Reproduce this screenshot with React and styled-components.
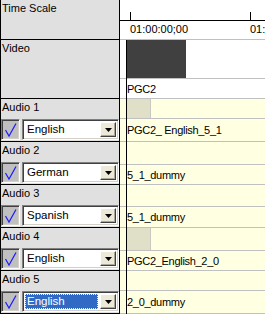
import React from 'react';
import styled, { createGlobalStyle } from 'styled-components';

const GlobalStyle = createGlobalStyle`
  html, body {
    margin: 0;
    padding: 0;
    width: 265px;
    height: 314px;
    overflow: hidden;
    background: #ffffff;
  }
  body {
    font-family: "Liberation Sans", Arial, sans-serif;
    font-size: 11px;
    color: #000000;
  }
  * { box-sizing: border-box; }
`;

// top = height of the upper lane of each audio track on the timeline (block is 43px)
const tracks = [
  { name: 'Audio 1', lang: 'English', clip: 'PGC2_ English_5_1', stub: true, top: 20 },
  { name: 'Audio 2', lang: 'German', clip: '5_1_dummy', top: 23 },
  { name: 'Audio 3', lang: 'Spanish', clip: '5_1_dummy', top: 22 },
  { name: 'Audio 4', lang: 'English', clip: 'PGC2_English_2_0', stub: true, top: 23 },
  { name: 'Audio 5', lang: 'English', clip: '2_0_dummy', focused: true, top: 20 },
];

const Check = function () {
  return (
    <svg width="17" height="19" viewBox="0 0 17 19">
      <path d="M3.5 10 L7 16 L14 3.5" fill="none" stroke="#1a1aff" strokeWidth="1.2" />
    </svg>
  );
};

const Arrow = function () {
  return (
    <svg width="7" height="4" viewBox="0 0 7 4">
      <path d="M0 0 H7 L3.5 4 Z" fill="#000" />
    </svg>
  );
};

const App = function () {
  return (
    <>
      <GlobalStyle />
      <Window>
        <Headers>
          <HeaderCell h={40}>Time Scale</HeaderCell>
          <HeaderCell h={59}>Video</HeaderCell>
          {tracks.map((t) => (
            <AudioHeader key={t.name}>
              <HeaderLabel>{t.name}</HeaderLabel>
              <Controls>
                <CheckBox><Check /></CheckBox>
                <Combo>
                  <ComboText focused={t.focused}>{t.lang}</ComboText>
                  <DropButton><Arrow /></DropButton>
                </Combo>
              </Controls>
            </AudioHeader>
          ))}
        </Headers>
        <Timeline>
          <Ruler>
            <TickRow>
              <Tick />
              <Tick />
            </TickRow>
            <LabelRow>
              <TickLabel>01:00:00;00</TickLabel>
              <TickLabel>01:00:00;00</TickLabel>
            </LabelRow>
          </Ruler>
          <Lane h={39}>
            <VideoClip />
          </Lane>
          <Lane h={20}>PGC2</Lane>
          {tracks.map((t) => (
            <div key={t.name}>
              <Lane h={t.top} audio>{t.stub && <Stub />}</Lane>
              <Lane h={43 - t.top} audio>{t.clip}</Lane>
            </div>
          ))}
          <Cursor />
        </Timeline>
      </Window>
    </>
  );
};

export default App;

const Window = styled.div`
  display: flex;
  width: 265px;
  height: 314px;
  overflow: hidden;
`;

const Headers = styled.div`
  flex: none;
  width: 120px;
  display: flex;
  flex-direction: column;
  background: #e0e0e0;
  border-left: 1px solid #000;
  border-right: 1px solid #000;
`;

const HeaderCell = styled.div`
  height: ${(p) => p.h}px;
  padding: 2px 0 0 1px;
  line-height: 13px;
  border-bottom: 1px solid #000;
`;

const AudioHeader = styled.div`
  height: 43px;
  display: flex;
  flex-direction: column;
  border-bottom: 1px solid #000;
`;

const HeaderLabel = styled.div`
  height: 20px;
  padding: 2px 0 0 1px;
  line-height: 13px;
`;

const Controls = styled.div`
  display: flex;
  gap: 2px;
  height: 21px;
`;

const CheckBox = styled.div`
  width: 19px;
  height: 21px;
  display: flex;
  align-items: center;
  justify-content: center;
  background: #c0c0c0;
  border: 1px solid;
  border-color: #808080 #ffffff #ffffff #808080;
  box-shadow: inset 1px 1px #404040, inset -1px -1px #d4d0c8;
`;

const Combo = styled.div`
  width: 97px;
  height: 21px;
  display: flex;
  align-items: center;
  padding: 2px;
  background: #ffffff;
  border: 1px solid;
  border-color: #808080 #ffffff #ffffff #808080;
  box-shadow: inset 1px 1px #404040, inset -1px -1px #d4d0c8;
`;

const ComboText = styled.div`
  flex: 1;
  height: 15px;
  margin-right: 2px;
  padding-left: 1px;
  line-height: 13px;
  font-size: 11.5px;
  color: ${(p) => (p.focused ? '#ffffff' : '#000')};
  background: ${(p) => (p.focused ? '#316ac5' : 'transparent')};
  border: 1px ${(p) => (p.focused ? 'dotted #ffff80' : 'solid transparent')};
`;

const DropButton = styled.div`
  flex: none;
  width: 16px;
  height: 15px;
  display: flex;
  align-items: center;
  justify-content: center;
  background: #ece9d8;
  border: 1px solid;
  border-color: #ffffff #404040 #404040 #ffffff;
  box-shadow: inset -1px -1px #aca899;
`;

const Timeline = styled.div`
  position: relative;
  flex: 1;
  display: flex;
  flex-direction: column;
  overflow: hidden;
  background: #ffffff;
`;

const Ruler = styled.div`
  height: 40px;
  flex: none;
  border-bottom: 1px solid #c0c0c0;
`;

const TickRow = styled.div`
  height: 21px;
  display: flex;
  align-items: flex-end;
  padding-left: 10px;
  border-bottom: 1px solid #000;
`;

const Tick = styled.div`
  flex: none;
  width: 120px;
  height: 8px;
  border-left: 1px solid #000;
`;

const LabelRow = styled.div`
  display: flex;
  padding: 2px 0 0 10px;
  line-height: 13px;
`;

const TickLabel = styled.div`
  flex: none;
  width: 120px;
  white-space: nowrap;
`;

const Lane = styled.div`
  flex: none;
  height: ${(p) => p.h}px;
  display: flex;
  align-items: center;
  padding-left: 7px;
  white-space: nowrap;
  letter-spacing: -0.3px;
  background: ${(p) => (p.audio ? '#ffffe1' : '#ffffff')};
  border-bottom: 1px solid #c0c0c0;
`;

const VideoClip = styled.div`
  align-self: stretch;
  width: 59px;
  background: #404040;
`;

const Stub = styled.div`
  align-self: stretch;
  width: 24px;
  background: #e0dfc8;
  border-right: 1px solid #c8c8c0;
`;

const Cursor = styled.div`
  position: absolute;
  left: 6px;
  top: 40px;
  bottom: 0;
  width: 1px;
  background: #000;
`;
